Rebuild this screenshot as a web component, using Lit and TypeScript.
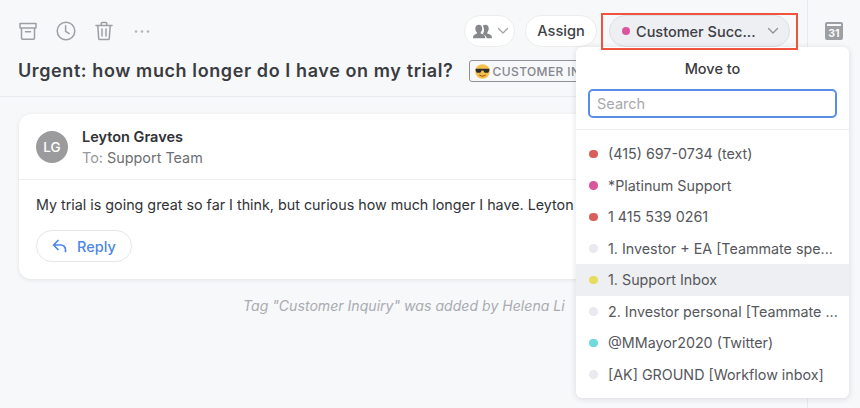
import { LitElement, html, css } from "lit";
import { customElement } from "lit/decorators.js";

const items = [
  ["(415) 697-0734 (text)", "#d9605a", false],
  ["*Platinum Support", "#d9559c", false],
  ["1 415 539 0261", "#d9605a", false],
  ["1. Investor + EA [Teammate spe...", "#e9eaef", false],
  ["1. Support Inbox", "#e8dc5c", true],
  ["2. Investor personal [Teammate ...", "#e9eaef", false],
  ["@MMayor2020 (Twitter)", "#6fd9de", false],
  ["[AK] GROUND [Workflow inbox]", "#e9eaef", false],
] as const;

@customElement("app-root")
export class AppRoot extends LitElement {
  static styles = css`
    :host { display: block; width: 860px; height: 408px; overflow: hidden; position: relative; font-family: Inter, "Liberation Sans", sans-serif; background: #f7f8fa; color: #3e4045; }
    .page { display: grid; grid-template-columns: 808px 52px; height: 408px; }
    .main { border-right: 1px solid #e9eaee; min-width: 0; display: flex; flex-direction: column; overflow: hidden; }
    .head { height: 97px; box-sizing: border-box; border-bottom: 1px solid #e9eaee; padding: 15px 0 0 18px; flex: none; }
    .tools { display: flex; align-items: center; height: 32px; }
    .icons { display: flex; align-items: center; gap: 18px; flex: none; width: 446px; }
    .icons svg { display: block; }
    .icons .more { margin-left: 2px; }
    .pill { height: 32px; box-sizing: border-box; border-radius: 16px; background: #fff; border: 1px solid #eceded; display: flex; align-items: center; flex: none; }
    .people { width: 51px; margin-right: 10px; padding-left: 8px; gap: 3px; }
    .assign { width: 72px; justify-content: center; font-size: 14.6px; font-weight: 500; color: #3e4045; margin-right: 12px; }
    .inbox { width: 181px; background: #eeeff2; border-color: #dfe0e4; padding: 0 10px 0 12px; font-size: 14.5px; font-weight: 500; gap: 6px; white-space: nowrap; color: #3e4045; }
    .inbox .chev { margin-left: auto; }
    .dot { width: 8px; height: 8px; border-radius: 50%; flex: none; }
    .subject { display: flex; align-items: center; margin-top: 8px; height: 32px; white-space: nowrap; }
    h1 { margin: 0; font-size: 18px; line-height: 32px; font-weight: 600; color: #3a3c41; letter-spacing: 0.6px; }
    .tag { margin-left: 15px; height: 22px; flex: none; box-sizing: border-box; border: 1px solid #8f9094; border-radius: 3px; display: flex; align-items: center; padding: 0 6px 0 5px; gap: 3px; font-size: 12px; font-weight: 500; color: #85878c; letter-spacing: 0.4px; }
    .emoji { width: 15px; height: 15px; flex: none; display: block; }
    .body { padding: 17px 18px 0 19px; }
    .card { background: #fff; border-radius: 12px; box-shadow: 0 1px 4px rgba(30, 35, 50, 0.1); height: 165px; }
    .card-head { height: 66px; box-sizing: border-box; border-bottom: 1px solid #eeeff1; display: flex; align-items: center; padding: 1px 17px 0; gap: 14px; }
    .avatar { width: 32px; height: 32px; border-radius: 50%; background: #9b9b9d; color: #fff; display: flex; align-items: center; justify-content: center; font-size: 13.5px; font-weight: 500; flex: none; }
    .name { font-size: 14.5px; font-weight: 600; color: #303236; line-height: 21px; }
    .to { font-size: 14.4px; color: #6d6f74; line-height: 21px; }
    .to span { color: #97999d; }
    .msg { margin: 14px 0 0; padding: 0 0 0 17px; font-size: 14.3px; line-height: 22px; color: #303236; white-space: nowrap; }
    .reply { margin: 14px 0 0 17px; width: 96px; height: 32px; box-sizing: border-box; border: 1px solid #e5e6e9; border-radius: 16px; display: flex; align-items: center; justify-content: center; gap: 10px; color: #4b86e8; font-size: 14.5px; font-weight: 500; }
    .log { margin: 18px 0 0; padding-left: 224px; font-size: 14.1px; line-height: 18px; font-style: italic; color: #a9abb0; white-space: nowrap; }
    .rail { display: flex; justify-content: center; padding: 21px 0 0 0; box-sizing: border-box; }
    .rail svg { display: block; margin-left: -1px; }
    .mark { position: absolute; left: 601px; top: 13px; width: 197px; height: 37px; box-sizing: border-box; border: 2px solid #f0533d; pointer-events: none; }
    .menu { position: absolute; left: 576px; top: 47px; width: 273px; height: 351px; background: #fff; border-radius: 6px; box-shadow: 0 1px 6px rgba(30, 35, 50, 0.14); display: flex; flex-direction: column; }
    .menu h2 { margin: 0; font-size: 14.5px; font-weight: 500; color: #3a3c41; text-align: center; line-height: 20px; padding-top: 12px; }
    .search { margin: 10px 12px 0; height: 29px; box-sizing: border-box; border: 2px solid #5a8ee6; border-radius: 5px; display: flex; align-items: center; padding-left: 7px; font-size: 14.5px; color: #a6a8ad; flex: none; }
    .list { margin-top: 11px; border-top: 1px solid #eeeff1; padding-top: 8px; }
    .row { height: 31.5px; display: flex; align-items: center; padding-left: 13px; gap: 10.500px; font-size: 14.3px; color: #55575c; white-space: nowrap; }
    .row .dot { width: 8.500px; height: 8.500px; }
    .row.on { background: #eeeff2; }
  `;

  render() {
    const g = "#9d9fa3";
    return html`
      <div class="page">
        <div class="main">
          <div class="head">
            <div class="tools">
              <div class="icons">
                <svg width="20" height="20" viewBox="0 0 20 20" fill="none" stroke=${g} stroke-width="1.5" stroke-linejoin="round" stroke-linecap="round"><path d="M2 2.500h16v4.500H2zM3.500 7v10a1.200 1.200 0 0 0 1.200 1.200h10.600a1.200 1.200 0 0 0 1.200-1.200V7M7.500 10.800h5"/></svg>
                <svg width="20" height="20" viewBox="0 0 20 20" fill="none" stroke=${g} stroke-width="1.500" stroke-linecap="round" stroke-linejoin="round"><circle cx="10" cy="10" r="8.800"/><path d="M9.600 4.800v5.600l3.600 2.200"/></svg>
                <svg width="20" height="20" viewBox="0 0 20 20" fill="none" stroke=${g} stroke-width="1.500" stroke-linecap="round" stroke-linejoin="round"><path d="M2 4.600h16M7.200 4.400V2.600a1 1 0 0 1 1-1h3.600a1 1 0 0 1 1 1v1.800M3.800 4.800l.9 12.600a1.300 1.300 0 0 0 1.300 1.200h8a1.300 1.300 0 0 0 1.300-1.200l.9-12.600M8 8v7M12 8v7"/></svg>
                <svg class="more" width="16" height="20" viewBox="0 0 16 20" fill="#b4b6ba"><circle cx="2" cy="10.500" r="1.300"/><circle cx="8" cy="10.500" r="1.300"/><circle cx="14" cy="10.500" r="1.300"/></svg>
              </div>
              <div class="pill people">
                <svg width="21" height="17" viewBox="0 0 20 16" fill="#85878b"><path d="M5.500 1.500c2 0 3.300 1.500 3.300 3.600 0 1.700-.7 3-1.500 3.700v1.200c1.700.6 4.300 1.400 4.300 3.400v1.100H0v-1.100c0-2 2.500-2.800 3.700-3.400V8.800C2.900 8.100 2.200 6.800 2.200 5.100c0-2.100 1.300-3.600 3.300-3.600z"/><path d="M11.800 1.500c2 0 3.200 1.500 3.200 3.600 0 1.700-.7 3-1.400 3.700v1.200c1.700.6 4.400 1.400 4.400 3.400v1.100h-4.900c-.1-2.300-1.900-3.200-3.900-4 .8-1.100 1.300-2.500 1.300-4 0-1.700-.5-3-1.300-3.900.6-.7 1.500-1.100 2.600-1.100z"/></svg>
                <svg class="chev" width="12" height="8" viewBox="0 0 12 8" fill="none" stroke="#a3a5a9" stroke-width="1.300" stroke-linecap="round" stroke-linejoin="round"><path d="M1.500 1.500 6 6l4.500-4.500"/></svg>
              </div>
              <div class="pill assign">Assign</div>
              <div class="pill inbox">
                <span class="dot" style="background:#d9559c"></span>
                <span>Customer Succ...</span>
                <svg class="chev" width="12" height="8" viewBox="0 0 12 8" fill="none" stroke="#8e9094" stroke-width="1.300" stroke-linecap="round" stroke-linejoin="round"><path d="M1.500 1.500 6 6l4.500-4.500"/></svg>
              </div>
            </div>
            <div class="subject">
              <h1>Urgent: how much longer do I have on my trial?</h1>
              <div class="tag">
                <svg class="emoji" viewBox="0 0 14 14"><circle cx="7" cy="7" r="6.800" fill="#f5c04a"/><path d="M.6 4.500h12.800v1.300l-.8 1.800c-.4.600-3.400.7-4 0L7.800 6h-1.600l-.8 1.600c-.6.700-3.600.6-4 0L.6 5.800z" fill="#2c2c2e"/><path d="M4 10.200c1.800 1.400 4.200 1.400 6 0" fill="none" stroke="#a8541a" stroke-width="1"/></svg>
                <span>CUSTOMER INQUIRY</span>
              </div>
            </div>
          </div>
          <div class="body">
            <div class="card">
              <div class="card-head">
                <div class="avatar">LG</div>
                <div>
                  <div class="name">Leyton Graves</div>
                  <div class="to"><span>To:</span> Support Team</div>
                </div>
              </div>
              <p class="msg">My trial is going great so far I think, but curious how much longer I have. Leyton</p>
              <div class="reply">
                <svg width="15" height="14" viewBox="0 0 15 14" fill="none" stroke="#4b86e8" stroke-width="1.700" stroke-linecap="round" stroke-linejoin="round"><path d="M6 1.500 1.500 6 6 10.500M1.500 6H9a4.500 4.500 0 0 1 4.500 4.500V12.500"/></svg>
                <span>Reply</span>
              </div>
            </div>
            <p class="log">Tag "Customer Inquiry" was added by Helena Li</p>
          </div>
        </div>
        <div class="rail">
          <svg width="18" height="20" viewBox="0 0 18 20"><rect x="0" y="1" width="18" height="18" rx="2" fill="#9d9fa3"/><rect x="2" y="3" width="14" height="2" fill="#f7f8fa"/><text x="9" y="16" text-anchor="middle" font-size="10.500" font-weight="700" fill="#f7f8fa" font-family="Inter, sans-serif">31</text></svg>
        </div>
      </div>
      <div class="menu">
        <h2>Move to</h2>
        <div class="search">Search</div>
        <div class="list">
          ${items.map(([label, color, on]) => html`
            <div class="row ${on ? "on" : ""}">
              <span class="dot" style="background:${color}"></span>
              <span>${label}</span>
            </div>`)}
        </div>
      </div>
      <div class="mark"></div>
    `;
  }
}
